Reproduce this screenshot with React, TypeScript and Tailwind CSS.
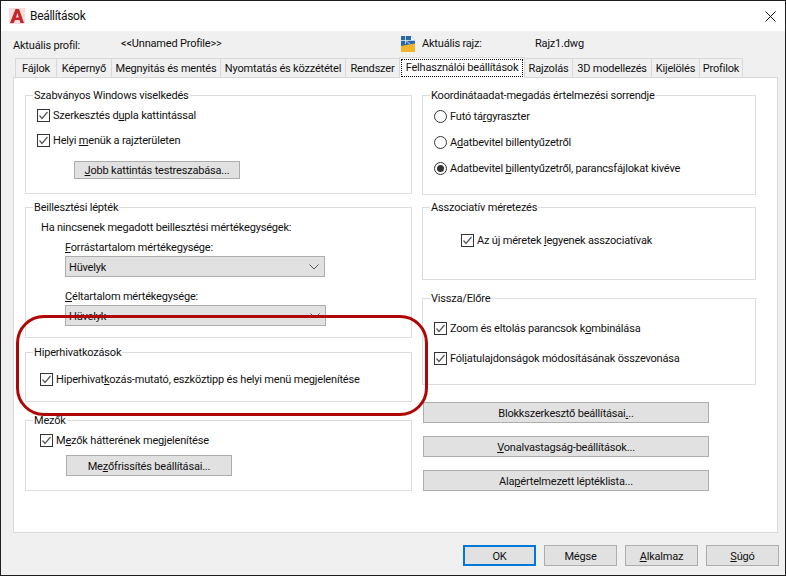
import React from 'react'

const tabs = [
  { label: 'Fájlok', w: 'w-[42px]' },
  { label: 'Képernyő', w: 'w-[56px]' },
  { label: 'Megnyitás és mentés', w: 'w-[110px]' },
  { label: 'Nyomtatás és közzététel', w: 'w-[126px]' },
  { label: 'Rendszer', w: 'w-[55px]' },
]
const tabsAfter = [
  { label: 'Rajzolás', w: 'w-[49px]' },
  { label: '3D modellezés', w: 'w-[80px]' },
  { label: 'Kijelölés', w: 'w-[49px]' },
  { label: 'Profilok', w: 'w-[44px]' },
]

function Tab({ label, w }: { label: string; w: string }) {
  return (
    <div className={`${w} h-[19px] pt-[1px] -ml-px first:ml-0 border border-b-0 border-[#d9d9d9] bg-[#f0f0f0] flex items-center justify-center whitespace-nowrap`}>
      {label}
    </div>
  )
}

function Group({ title, className, inner, children }: { title: string; className: string; inner: string; children?: React.ReactNode }) {
  return (
    <div className={`border border-[#dcdcdc] ${className}`}>
      <div className="-mt-[8px] ml-[7px] w-fit bg-white px-[1px] h-[16px] leading-[16px] whitespace-nowrap">{title}</div>
      <div className={`-mt-[1px] ${inner}`}>{children}</div>
    </div>
  )
}

function Check({ children, className = '' }: { children: React.ReactNode; className?: string }) {
  return (
    <div className={`flex items-center h-[16px] whitespace-nowrap ${className}`}>
      <svg width="13" height="13" viewBox="0 0 13 13" className="shrink-0 mr-[3px]">
        <rect x="0.5" y="0.5" width="12" height="12" fill="#fff" stroke="#333" />
        <path d="M2.5 6.5 L5 9.5 L10.5 3" fill="none" stroke="#555" strokeWidth="1.2" />
      </svg>
      <span className="mt-[2px]">{children}</span>
    </div>
  )
}

function Radio({ children, on, className = '' }: { children: React.ReactNode; on?: boolean; className?: string }) {
  return (
    <div className={`flex items-center h-[16px] whitespace-nowrap ${className}`}>
      <svg width="13" height="13" viewBox="0 0 13 13" className="shrink-0 mr-[3px]">
        <circle cx="6.5" cy="6.5" r="6" fill="#fff" stroke="#333" />
        {on && <circle cx="6.5" cy="6.5" r="3.5" fill="#333" />}
      </svg>
      <span className="mt-[2px]">{children}</span>
    </div>
  )
}

function Btn({ children, className }: { children: React.ReactNode; className: string }) {
  return (
    <div className={`border border-[#adadad] bg-[#e1e1e1] pt-[2px] flex items-center justify-center whitespace-nowrap ${className}`}>
      {children}
    </div>
  )
}

function Combo({ className = '' }: { className?: string }) {
  return (
    <div className={`h-[21px] border border-[#adadad] bg-[#e1e1e1] flex items-center justify-between pl-[3px] pr-[5px] ${className}`}>
      <span className="mt-[2px]">Hüvelyk</span>
      <svg width="10" height="6" viewBox="0 0 10 6">
        <path d="M0.5 0.5 L5 5 L9.5 0.5" fill="none" stroke="#555" strokeWidth="1" />
      </svg>
    </div>
  )
}

export default function App() {
  return (
    <div className="relative w-[786px] h-[576px] overflow-hidden border border-[#1f1f1f] bg-[#f0f0f0] text-[11px] tracking-[-0.19px] leading-[16px] text-[#111] font-['Roboto','Liberation_Sans',sans-serif] flex flex-col">
      {/* Title bar */}
      <div className="h-[30px] shrink-0 bg-white flex items-center pl-[8px] pr-[9px]">
        <svg width="16" height="16" viewBox="0 0 16 16" className="mr-[5px]">
          <rect width="16" height="16" fill="#f6dcdc" />
          <path d="M1 15 L6.5 1 H10 L15 15 H11.5 L10.6 12 H6 L4.8 15 Z M7 9.5 H9.8 L8.4 5 Z" fill="#c1272d" fillRule="evenodd" />
        </svg>
        <span className="text-[12px] tracking-[-0.3px]">Beállítások</span>
        <svg width="11" height="11" viewBox="0 0 11 11" className="ml-auto">
          <path d="M0.5 0.5 L10.5 10.5 M10.5 0.5 L0.5 10.5" stroke="#111" strokeWidth="1" />
        </svg>
      </div>

      {/* Profile row */}
      <div className="h-[26px] shrink-0 flex items-center pl-[12px] relative">
        <span className="w-[108px] mt-[4px]">Aktuális profil:</span>
        <span className="w-[280px] -mt-[1px]">&lt;&lt;Unnamed Profile&gt;&gt;</span>
        <svg width="14" height="16" viewBox="0 0 14 16" className="mr-[7px]">
          <path d="M0 0 H10 L14 4 V16 H0 Z" fill="#2b68a8" />
          <path d="M0 10 L14 7.5 V16 H0 Z" fill="#f3b52b" />
          <path d="M4.5 0 V8 M0 4.5 H14 M4.5 4.5 L9 8" stroke="#dfeaf5" strokeWidth="0.8" />
          <path d="M10 0 L14 4 H10 Z" fill="#fff" />
        </svg>
        <span className="w-[113px] -mt-[1px]">Aktuális rajz:</span>
        <span className="-mt-[1px]">Rajz1.dwg</span>
      </div>

      {/* Tabs */}
      <div className="h-[20px] shrink-0 ml-[14px] flex items-end relative z-10">
        {tabs.map((t) => (
          <Tab key={t.label} {...t} />
        ))}
        <div className="w-[126px] h-[21px] -ml-[1px] -mb-px border border-b-0 border-[#d9d9d9] bg-white p-[1px] relative z-10">
          <div className="h-[18px] border border-dotted border-black flex items-center justify-center whitespace-nowrap">
            Felhasználói beállítások
          </div>
        </div>
        {tabsAfter.map((t) => (
          <Tab key={t.label} {...t} />
        ))}
      </div>

      {/* Panel */}
      <div className="ml-[12px] w-[765px] h-[456px] shrink-0 border border-[#d9d9d9] bg-white pt-[17px] pl-[11px] flex gap-[10px]">
        {/* Left column */}
        <div className="w-[387px] flex flex-col">
          <Group title="Szabványos Windows viselkedés" className="h-[99px]" inner="pl-[11px]">
            <Check className="mt-[4px]">
              Szerkesztés d<u>u</u>pla kattintással
            </Check>
            <Check className="mt-[9px]">
              Helyi <u>m</u>enük a rajzterületen
            </Check>
            <Btn className="mt-[13px] ml-[37px] w-[166px] h-[18px]">
              <span>
                <u>J</u>obb kattintás testreszabása...
              </span>
            </Btn>
          </Group>
          <Group title="Beillesztési lépték" className="mt-[13px] h-[131px]" inner="pl-[15px]">
            <div className="mt-[4px] pt-[1px]">Ha nincsenek megadott beillesztési mértékegységek:</div>
            <div className="ml-[24px] mt-[3px] pt-[1px]">
              <u>F</u>orrástartalom mértékegysége:
            </div>
            <Combo className="ml-[24px] w-[260px]" />
            <div className="ml-[24px] mt-[11px] pt-[1px]">
              <u>C</u>éltartalom mértékegysége:
            </div>
            <Combo className="ml-[24px] w-[261px]" />
          </Group>
          <Group title="Hiperhivatkozások" className="mt-[14px] h-[50px]" inner="pl-[14px]">
            <Check className="mt-[11px]">
              Hiperhivat<u>k</u>ozás-mutató, eszköztipp és helyi menü megjelenítése
            </Check>
          </Group>
          <Group title="Mezők" className="mt-[18px] h-[71px]" inner="pl-[14px]">
            <Check className="mt-[4px]">
              M<u>e</u>zők hátterének megjelenítése
            </Check>
            <Btn className="mt-[7px] ml-[26px] w-[166px] h-[21px]">
              <span>
                Me<u>z</u>őfrissítés beállításai...
              </span>
            </Btn>
          </Group>
        </div>

        {/* Right column */}
        <div className="w-[334px] flex flex-col">
          <Group title="Koordinátaadat-megadás értelmezési sorrendje" className="h-[100px]" inner="pl-[11px]">
            <Radio className="mt-[5px]">
              Futó tá<u>r</u>gyraszter
            </Radio>
            <Radio className="mt-[10px]">
              A<u>d</u>atbevitel billentyűzetről
            </Radio>
            <Radio on className="mt-[10px]">
              Adatbevitel <u>b</u>illentyűzetről, parancsfájlokat kivéve
            </Radio>
          </Group>
          <Group title="Asszociatív méretezés" className="mt-[12px] h-[73px]" inner="pl-[38px]">
            <Check className="mt-[17px]">
              Az új méretek <u>l</u>egyenek asszociatívak
            </Check>
          </Group>
          <Group title="Vissza/Előre" className="mt-[18px] h-[87px]" inner="pl-[11px]">
            <Check className="mt-[14px]">
              Zoom és eltolás parancsok k<u>o</u>mbinálása
            </Check>
            <Check className="mt-[14px]">
              Fól<u>i</u>atulajdonságok módosításának összevonása
            </Check>
          </Group>
          <div className="mt-[17px] ml-[1px] w-[286px] flex flex-col gap-[13px]">
            <Btn className="h-[21px]">
              <span>
                Blokkszerkesztő beállításai<u>.</u>..
              </span>
            </Btn>
            <Btn className="h-[21px]">
              <span>
                <u>V</u>onalvastagság-beállítások...
              </span>
            </Btn>
            <Btn className="h-[21px]">
              <span>
                Ala<u>p</u>értelmezett léptéklista...
              </span>
            </Btn>
          </div>
        </div>
      </div>

      {/* Dialog buttons */}
      <div className="mt-[12px] ml-[462px] flex gap-[8px]">
        <Btn className="w-[73px] h-[21px] !border-2 !border-[#0078d7]">OK</Btn>
        <Btn className="w-[73px] h-[21px]">Mégse</Btn>
        <Btn className="w-[73px] h-[21px]">
          <span>
            <u>A</u>lkalmaz
          </span>
        </Btn>
        <Btn className="w-[73px] h-[21px]">
          <span>
            <u>S</u>úgó
          </span>
        </Btn>
      </div>

      {/* Red highlight drawn over the dialog */}
      <div className="absolute left-[15px] top-[314px] w-[412px] h-[101px] rounded-[28px] border-[3px] border-[#b00606] pointer-events-none" />
    </div>
  )
}
